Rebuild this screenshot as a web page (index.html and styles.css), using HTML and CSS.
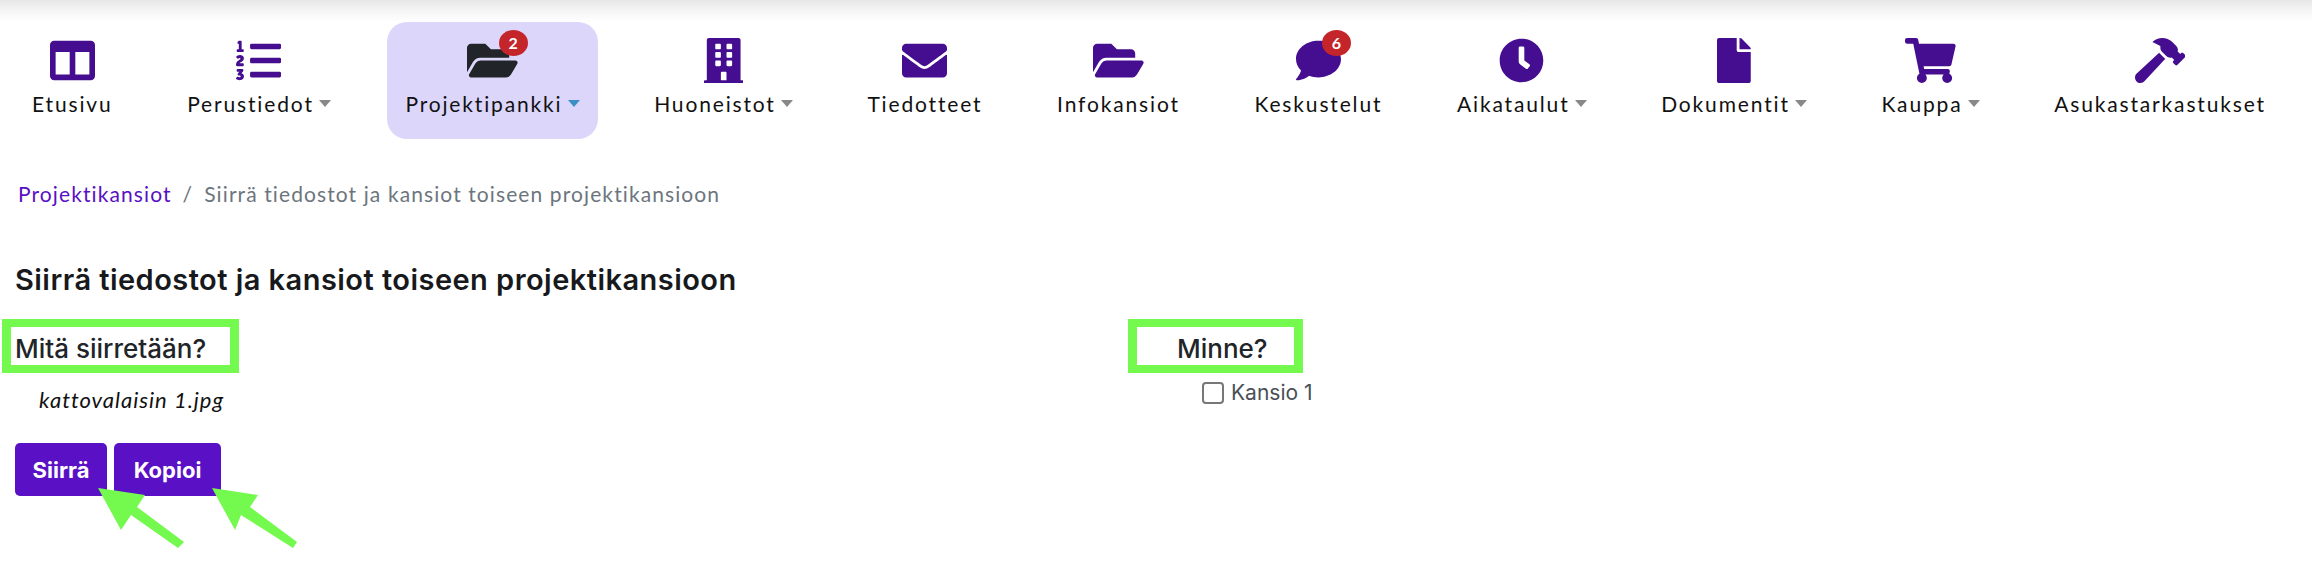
FILE: index.html
```html
<!DOCTYPE html>
<html lang="fi">
<head>
<meta charset="utf-8">
<title>Siirrä tiedostot ja kansiot toiseen projektikansioon</title>
<link rel="stylesheet" href="styles.css">
</head>
<body>
<nav class="nav">
  <a class="nav-item"><span class="icon"><svg viewBox="0 0 512 512"><path d="M464 32H48C21.49 32 0 53.49 0 80v352c0 26.51 21.49 48 48 48h416c26.51 0 48-21.49 48-48V80c0-26.51-21.49-48-48-48zM224 416H64V160h160v256zm224 0H288V160h160v256z"/></svg></span><span class="label">Etusivu</span></a>
  <a class="nav-item has-menu"><span class="icon"><svg viewBox="0 0 512 512"><path d="M61.77 401l17.5-20.15a19.92 19.92 0 0 0 5.07-14.19v-3.31C84.34 356 80.5 352 73 352H16a8 8 0 0 0-8 8v16a8 8 0 0 0 8 8h22.83a157.41 157.41 0 0 0-11 12.31l-5.61 7c-4 5.07-5.25 10.13-2.8 14.88l1.05 1.93c3 5.76 6.29 7.88 12.25 7.88h4.73c10.33 0 15.94 2.44 15.94 9.09 0 4.72-4.2 8.22-14.36 8.22a41.54 41.54 0 0 1-15.47-3.12c-6.49-3.88-11.74-3.5-15.6 3.12l-5.59 9.31c-3.72 6.13-3.19 11.72 2.63 15.94 7.71 4.69 20.38 9.44 37 9.44 34.16 0 48.5-22.75 48.5-44.12-.03-14.38-9.12-29.76-28.73-34.88zM496 224H176a16 16 0 0 0-16 16v32a16 16 0 0 0 16 16h320a16 16 0 0 0 16-16v-32a16 16 0 0 0-16-16zm0-160H176a16 16 0 0 0-16 16v32a16 16 0 0 0 16 16h320a16 16 0 0 0 16-16V80a16 16 0 0 0-16-16zm0 320H176a16 16 0 0 0-16 16v32a16 16 0 0 0 16 16h320a16 16 0 0 0 16-16v-32a16 16 0 0 0-16-16zM16 160h64a8 8 0 0 0 8-8v-16a8 8 0 0 0-8-8H64V40a8 8 0 0 0-8-8H32a8 8 0 0 0-7.14 4.42l-8 16A8 8 0 0 0 24 64h8v64H16a8 8 0 0 0-8 8v16a8 8 0 0 0 8 8zm-3.91 160H80a8 8 0 0 0 8-8v-16a8 8 0 0 0-8-8H41.32c3.29-10.29 48.34-18.68 48.34-56.44 0-29.06-25-39.56-44.47-39.56-21.36 0-33.8 10-40.46 18.75-4.37 5.59-3 10.84 2.8 15.37l8.58 6.88c5.61 4.56 11 2.47 16.12-2.44a13.44 13.44 0 0 1 9.46-3.84c3.33 0 9.28 1.56 9.28 8.75C51 248.19 0 257.31 0 304.59v4C0 316 5.08 320 12.09 320z"/></svg></span><span class="label">Perustiedot</span></a>
  <a class="nav-item has-menu active"><span class="icon"><svg viewBox="0 0 576 512"><path d="M572.694 292.093L500.27 416.248A63.997 63.997 0 0 1 444.989 448H45.025c-18.523 0-30.064-20.093-20.731-36.093l72.424-124.155A64 64 0 0 1 152 256h399.964c18.523 0 30.064 20.093 20.73 36.093zM152 224h328v-48c0-26.51-21.49-48-48-48H272l-64-64H48C21.49 64 0 85.49 0 112v278.046l69.077-118.418C86.214 242.25 117.989 224 152 224z"/></svg><span class="badge">2</span></span><span class="label">Projektipankki</span></a>
  <a class="nav-item has-menu"><span class="icon"><svg viewBox="0 0 448 512"><path d="M436 480h-20V24c0-13.255-10.745-24-24-24H56C42.745 0 32 10.745 32 24v456H12c-6.627 0-12 5.373-12 12v20h448v-20c0-6.627-5.373-12-12-12zM128 76c0-6.627 5.373-12 12-12h40c6.627 0 12 5.373 12 12v40c0 6.627-5.373 12-12 12h-40c-6.627 0-12-5.373-12-12V76zm0 96c0-6.627 5.373-12 12-12h40c6.627 0 12 5.373 12 12v40c0 6.627-5.373 12-12 12h-40c-6.627 0-12-5.373-12-12v-40zm52 148h-40c-6.627 0-12-5.373-12-12v-40c0-6.627 5.373-12 12-12h40c6.627 0 12 5.373 12 12v40c0 6.627-5.373 12-12 12zm76 160h-64v-84c0-6.627 5.373-12 12-12h40c6.627 0 12 5.373 12 12v84zm64-172c0 6.627-5.373 12-12 12h-40c-6.627 0-12-5.373-12-12v-40c0-6.627 5.373-12 12-12h40c6.627 0 12 5.373 12 12v40zm0-96c0 6.627-5.373 12-12 12h-40c-6.627 0-12-5.373-12-12v-40c0-6.627 5.373-12 12-12h40c6.627 0 12 5.373 12 12v40zm0-96c0 6.627-5.373 12-12 12h-40c-6.627 0-12-5.373-12-12V76c0-6.627 5.373-12 12-12h40c6.627 0 12 5.373 12 12v40z"/></svg></span><span class="label">Huoneistot</span></a>
  <a class="nav-item"><span class="icon"><svg viewBox="0 0 512 512"><path d="M502.3 190.8c3.9-3.1 9.7-.2 9.7 4.7V400c0 26.5-21.5 48-48 48H48c-26.5 0-48-21.5-48-48V195.6c0-5 5.7-7.8 9.7-4.7 22.4 17.4 52.1 39.5 154.1 113.6 21.1 15.4 56.7 47.8 92.2 47.6 35.7.3 72-32.8 92.3-47.6 102-74.1 131.6-96.3 154-113.7zM256 320c23.2.4 56.6-29.2 73.4-41.4 132.7-96.3 142.8-104.7 173.4-128.7 5.8-4.5 9.2-11.5 9.2-18.9v-19c0-26.5-21.5-48-48-48H48C21.5 64 0 85.5 0 112v19c0 7.4 3.4 14.3 9.2 18.9 30.6 23.9 40.7 32.4 173.4 128.7 16.8 12.2 50.2 41.8 73.4 41.4z"/></svg></span><span class="label">Tiedotteet</span></a>
  <a class="nav-item"><span class="icon"><svg viewBox="0 0 576 512"><path d="M572.694 292.093L500.27 416.248A63.997 63.997 0 0 1 444.989 448H45.025c-18.523 0-30.064-20.093-20.731-36.093l72.424-124.155A64 64 0 0 1 152 256h399.964c18.523 0 30.064 20.093 20.73 36.093zM152 224h328v-48c0-26.51-21.49-48-48-48H272l-64-64H48C21.49 64 0 85.49 0 112v278.046l69.077-118.418C86.214 242.25 117.989 224 152 224z"/></svg></span><span class="label">Infokansiot</span></a>
  <a class="nav-item"><span class="icon"><svg viewBox="0 0 512 512"><path d="M256 32C114.6 32 0 125.1 0 240c0 49.6 21.4 95 57 130.7C44.5 421.1 2.7 466 2.2 466.5c-2.2 2.3-2.8 5.7-1.5 8.7S4.8 480 8 480c66.3 0 116-31.8 140.6-51.4 32.7 12.3 69 19.4 107.4 19.4 141.4 0 256-93.1 256-208S397.4 32 256 32z"/></svg><span class="badge">6</span></span><span class="label">Keskustelut</span></a>
  <a class="nav-item has-menu"><span class="icon"><svg viewBox="0 0 512 512"><path d="M256,8C119,8,8,119,8,256S119,504,256,504,504,393,504,256,393,8,256,8Zm92.49,313h0l-20,25a16,16,0,0,1-22.49,2.5h0l-67-49.72a40,40,0,0,1-15-31.23V112a16,16,0,0,1,16-16h32a16,16,0,0,1,16,16V256l58,42.5A16,16,0,0,1,348.49,321Z"/></svg></span><span class="label">Aikataulut</span></a>
  <a class="nav-item has-menu"><span class="icon"><svg viewBox="0 0 384 512"><path d="M224 136V0H24C10.7 0 0 10.7 0 24v464c0 13.3 10.7 24 24 24h336c13.3 0 24-10.7 24-24V160H248c-13.2 0-24-10.8-24-24zm160-14.1v6.1H256V0h6.1c6.4 0 12.5 2.5 17 7l97.9 98c4.5 4.5 7 10.6 7 16.9z"/></svg></span><span class="label">Dokumentit</span></a>
  <a class="nav-item has-menu"><span class="icon"><svg viewBox="0 0 576 512"><path d="M528.12 301.319l47.273-208C578.806 78.301 567.391 64 551.99 64H159.208l-9.166-44.81C147.758 8.021 137.93 0 126.529 0H24C10.745 0 0 10.745 0 24v16c0 13.255 10.745 24 24 24h69.883l70.248 343.435C147.325 417.1 136 435.222 136 456c0 30.928 25.072 56 56 56s56-25.072 56-56c0-15.674-6.447-29.835-16.824-40h209.647C430.447 426.165 424 440.326 424 456c0 30.928 25.072 56 56 56s56-25.072 56-56c0-22.172-12.888-41.332-31.579-50.405l5.517-24.276c3.413-15.018-8.002-29.319-23.403-29.319H218.117l-6.545-32h293.145c11.206 0 20.92-7.754 23.403-18.681z"/></svg></span><span class="label">Kauppa</span></a>
  <a class="nav-item"><span class="icon"><svg viewBox="0 0 576 512"><path d="M571.31 193.94l-22.63-22.63c-6.25-6.25-16.38-6.25-22.63 0l-11.31 11.31-28.9-28.9c5.63-21.31.36-44.9-16.35-61.61l-45.25-45.25c-62.48-62.48-163.79-62.48-226.28 0l90.51 45.25v18.75c0 16.97 6.74 33.25 18.75 45.25l49.14 49.14c16.71 16.71 40.3 21.98 61.61 16.35l28.9 28.9-11.31 11.31c-6.25 6.25-6.25 16.38 0 22.63l22.63 22.63c6.25 6.25 16.38 6.25 22.63 0l90.51-90.51c6.23-6.24 6.23-16.37-.01-22.62zm-286.72-15.2c-3.7-3.7-6.84-7.79-9.85-11.95L19.64 404.96c-25.57 23.88-26.26 64.19-1.53 88.93s65.05 24.05 88.93-1.53l238.13-255.07c-3.96-2.91-7.9-5.87-11.44-9.41l-49.14-49.14z"/></svg></span><span class="label">Asukastarkastukset</span></a>
</nav>

<main class="main">
  <ol class="crumbs">
    <li><a class="crumb-link">Projektikansiot</a></li>
    <li class="crumb-sep">/</li>
    <li class="crumb-current">Siirrä tiedostot ja kansiot toiseen projektikansioon</li>
  </ol>
  <h1 class="title">Siirrä tiedostot ja kansiot toiseen projektikansioon</h1>
  <div class="columns">
    <section class="col-left">
      <h2 class="marked marked-what">Mitä siirretään?</h2>
      <p class="file">kattovalaisin 1.jpg</p>
      <div class="actions">
        <button class="btn btn-move">Siirrä</button>
        <button class="btn btn-copy">Kopioi</button>
      </div>
    </section>
    <section class="col-right">
      <h2 class="marked marked-where">Minne?</h2>
      <label class="check"><input type="checkbox" class="check-box"><span>Kansio 1</span></label>
    </section>
  </div>
  <svg class="arrows" viewBox="0 0 320 80" aria-hidden="true">
    <polygon points="98,8 145,15 137,27 184,62 178,68 131,35 121,50"/>
    <polygon points="212,8 258,15 250,27 297,62 293,68 241,35 235,50"/>
  </svg>
</main>
</body>
</html>
```
FILE: styles.css
```css
* { box-sizing: border-box; }
html, body { margin: 0; padding: 0; background: #fff; }
body {
  position: relative;
  width: 2312px;
  height: 562px;
  overflow: hidden;
  font-family: "Lato", "Liberation Sans", sans-serif;
  color: #212529;
}
.nav {
  display: flex;
  justify-content: space-between;
  align-items: flex-start;
  height: 139px;
  padding: 22px 28px 0 14px;
  background: linear-gradient(#e6e6e6 0, #f4f4f4 10px, #fff 22px);
}
.nav-item {
  display: flex;
  flex-direction: column;
  align-items: center;
  height: 117px;
  padding: 16px 18px 0;
  border-radius: 20px;
  color: #111;
}
.nav-item.active { background: #ddd6fb; }
.icon {
  position: relative;
  display: block;
  height: 45px;
  line-height: 0;
}
.icon svg { height: 45px; width: auto; fill: #450d8f; }
.active .icon svg { fill: #212529; }
.badge {
  position: absolute;
  top: -8px;
  left: calc(100% - 19px);
  width: 29px;
  height: 26px;
  border-radius: 50%;
  background: #c4252b;
  color: #fff;
  font-size: 16px;
  font-weight: 700;
  line-height: 26px;
  text-align: center;
}
.label {
  display: flex;
  align-items: center;
  margin-top: 6px;
  font-size: 21px;
  line-height: 30px;
  letter-spacing: 1.85px;
  white-space: nowrap;
}
.has-menu .label::after {
  content: "";
  margin-left: 5px;
  margin-top: -1px;
  border-left: 6px solid transparent;
  border-right: 6px solid transparent;
  border-top: 7px solid #888;
}
.active .label::after { border-top-color: #3a8fc4; }

.main { position: relative; padding: 0 15px; }
.crumbs {
  display: flex;
  gap: 11px;
  margin: 0;
  padding: 41px 0 0 3px;
  list-style: none;
  font-size: 21px;
  line-height: 28px;
  letter-spacing: 1.1px;
}
.crumb-link { color: #5a10c4; }
.crumb-sep, .crumb-current { color: #6c757d; }
.title {
  margin: 53px 0 0;
  font-family: "Inter", "Liberation Sans", sans-serif;
  font-size: 29px;
  font-weight: 600;
  line-height: 38px;
  letter-spacing: .46px;
  color: #17191c;
}
.columns { display: flex; margin-top: 20px; }
.col-left { width: 1113px; }
.marked {
  display: block;
  height: 54px;
  margin: 0;
  padding-top: 3px;
  border: solid #74f94e;
  border-width: 8px 9px;
  font-family: "Inter", "Liberation Sans", sans-serif;
  font-size: 26px;
  font-weight: 500;
  line-height: 38px;
  color: #212529;
}
.marked-what { width: 237px; margin-left: -13px; padding-left: 4px; }
.marked-where { width: 175px; padding-left: 40px; }
.file {
  margin: 11px 0 0 24px;
  font-size: 22px;
  font-style: italic;
  line-height: 32px;
  letter-spacing: 1px;
  color: #111;
}
.actions { display: flex; gap: 7px; margin-top: 27px; }
.btn {
  height: 53px;
  padding: 0;
  border: 0;
  border-radius: 5px;
  background: #5a10c4;
  color: #fff;
  font-family: "Inter", "Liberation Sans", sans-serif;
  font-size: 22px;
  font-weight: 700;
}
.btn-move { width: 92px; }
.btn-copy { width: 107px; }
.check {
  display: flex;
  align-items: center;
  gap: 7px;
  margin: 8px 0 0 74px;
  font-family: "Inter", "Liberation Sans", sans-serif;
  font-size: 21px;
  line-height: 24px;
  color: #495057;
}
.check-box {
  appearance: none;
  width: 22px;
  height: 22px;
  margin: 0;
  border: 2px solid #777;
  border-radius: 4px;
  background: #fff;
}
.arrows {
  position: absolute;
  left: 0;
  top: 341px;
  width: 320px;
  height: 80px;
  fill: #74f94e;
}
```
